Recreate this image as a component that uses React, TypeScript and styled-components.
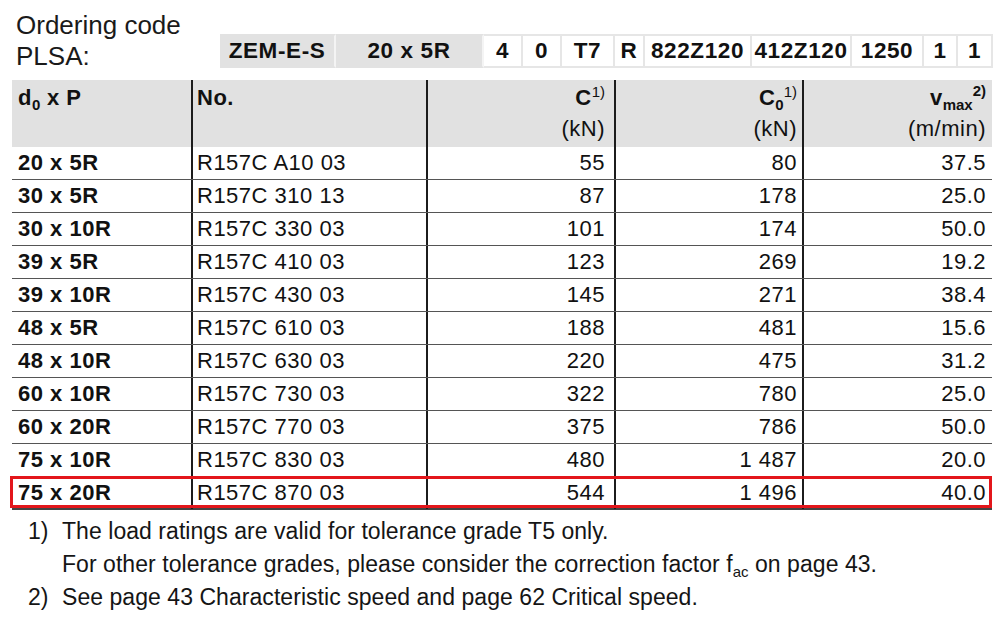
import React from "react";
import styled, { createGlobalStyle } from "styled-components";

const Global = createGlobalStyle`
  html, body { margin: 0; padding: 0; background: #fff; }
  body { font-family: "Liberation Sans", Arial, Helvetica, sans-serif; color: #111; }
`;

const Page = styled.div`
  width: 1000px;
  height: 623px;
  box-sizing: border-box;
  padding: 10px 0 0 0;
  overflow: hidden;
`;

const TopRow = styled.div`
  display: flex;
  align-items: flex-end;
  padding-left: 16px;
`;

const Title = styled.div`
  font-size: 26px;
  line-height: 31px;
  width: 204px;
  color: #1a1a1a;
`;

const CodeBar = styled.div`
  display: flex;
  height: 34px;
  margin-bottom: 4px;
`;

const CodeCell = styled.div<{ $w: number; $grey?: boolean }>`
  width: ${(p) => p.$w}px;
  box-sizing: border-box;
  display: flex;
  align-items: center;
  justify-content: center;
  font-weight: bold;
  font-size: 22.5px;
  letter-spacing: 0.6px;
  background: ${(p) => (p.$grey ? "#e2e2e2" : "#fff")};
  border-top: 2px solid ${(p) => (p.$grey ? "#e2e2e2" : "#e6e6e6")};
  border-bottom: 2px solid ${(p) => (p.$grey ? "#e2e2e2" : "#e6e6e6")};
  border-right: 2px solid ${(p) => (p.$grey ? "#f4f4f4" : "#e6e6e6")};
`;

const Table = styled.div`
  margin: 8px 0 0 12px;
  width: 980px;
`;

const COLS = "179px 235px 188px 188px 190px";

const HeadRow = styled.div`
  display: grid;
  grid-template-columns: ${COLS};
  background: #e1e1e1;
  height: 67px;
`;

const Row = styled.div<{ $hl?: boolean; $last?: boolean }>`
  display: grid;
  grid-template-columns: ${COLS};
  height: 33px;
  box-sizing: border-box;
  border-bottom: ${(p) => (p.$last ? "2px solid #444" : "1px solid #555")};
  position: relative;
  ${(p) =>
    p.$hl
      ? `&::after {
    content: "";
    position: absolute;
    left: -2px;
    right: 0;
    top: -1px;
    bottom: 0;
    border: 3px solid #e3161b;
    pointer-events: none;
  }`
      : ""}
`;

const HeadCell = styled.div<{ $right?: boolean; $first?: boolean; $pr?: number }>`
  box-sizing: border-box;
  border-left: ${(p) => (p.$first ? "none" : "2px solid #1c1c1c")};
  padding: 2px ${(p) => p.$pr ?? 8}px 0 ${(p) => (p.$first ? 6 : 4)}px;
  text-align: ${(p) => (p.$right ? "right" : "left")};
  font-size: 22px;
  letter-spacing: 0.5px;
  line-height: 31px;
  white-space: nowrap;
`;

const Cell = styled.div<{ $right?: boolean; $first?: boolean; $bold?: boolean; $pr?: number }>`
  box-sizing: border-box;
  border-left: ${(p) => (p.$first ? "none" : "2px solid #1c1c1c")};
  padding: 0 ${(p) => p.$pr ?? 8}px 0 ${(p) => (p.$first ? 6 : 4)}px;
  text-align: ${(p) => (p.$right ? "right" : "left")};
  font-size: 22px;
  font-weight: ${(p) => (p.$bold ? "bold" : "normal")};
  letter-spacing: 0.5px;
  line-height: 32px;
  white-space: nowrap;
`;

const B = styled.span`
  font-weight: bold;
`;

const Sub = styled.sub<{ $bold?: boolean }>`
  font-size: 15px;
  vertical-align: -5px;
  line-height: 0;
  letter-spacing: 0;
  font-weight: ${(p) => (p.$bold ? "bold" : "normal")};
`;

const Sup = styled.sup<{ $bold?: boolean; $up?: number }>`
  font-size: 15px;
  vertical-align: ${(p) => p.$up ?? 8}px;
  line-height: 0;
  letter-spacing: 0;
  font-weight: ${(p) => (p.$bold ? "bold" : "normal")};
`;

const Notes = styled.div`
  padding: 5px 0 0 28px;
  font-size: 23px;
  letter-spacing: 0.05px;
  line-height: 33px;
  color: #151515;
`;

const Note = styled.div`
  display: grid;
  grid-template-columns: 34px 1fr;
`;

const codes: { t: string; w: number; grey?: boolean }[] = [
  { t: "ZEM-E-S", w: 116, grey: true },
  { t: "20 x 5R", w: 148, grey: true },
  { t: "4", w: 39 },
  { t: "0", w: 39 },
  { t: "T7", w: 53 },
  { t: "R", w: 30 },
  { t: "822Z120", w: 107 },
  { t: "412Z120", w: 100 },
  { t: "1250", w: 72 },
  { t: "1", w: 34 },
  { t: "1", w: 35 },
];

const rows: [string, string, string, string, string][] = [
  ["20 x 5R", "R157C A10 03", "55", "80", "37.5"],
  ["30 x 5R", "R157C 310 13", "87", "178", "25.0"],
  ["30 x 10R", "R157C 330 03", "101", "174", "50.0"],
  ["39 x 5R", "R157C 410 03", "123", "269", "19.2"],
  ["39 x 10R", "R157C 430 03", "145", "271", "38.4"],
  ["48 x 5R", "R157C 610 03", "188", "481", "15.6"],
  ["48 x 10R", "R157C 630 03", "220", "475", "31.2"],
  ["60 x 10R", "R157C 730 03", "322", "780", "25.0"],
  ["60 x 20R", "R157C 770 03", "375", "786", "50.0"],
  ["75 x 10R", "R157C 830 03", "480", "1 487", "20.0"],
  ["75 x 20R", "R157C 870 03", "544", "1 496", "40.0"],
];

export default function App() {
  return (
    <Page>
      <Global />
      <TopRow>
        <Title>
          Ordering code
          <br />
          PLSA:
        </Title>
        <CodeBar>
          {codes.map((c, i) => (
            <CodeCell key={i} $w={c.w} $grey={c.grey}>
              {c.t}
            </CodeCell>
          ))}
        </CodeBar>
      </TopRow>
      <Table>
        <HeadRow>
          <HeadCell $first>
            <B>
              d<Sub $bold>0</Sub> x P
            </B>
          </HeadCell>
          <HeadCell>
            <B>No.</B>
          </HeadCell>
          <HeadCell $right $pr={9}>
            <B>C</B>
            <Sup>1)</Sup>
            <br />
            (kN)
          </HeadCell>
          <HeadCell $right $pr={5}>
            <B>
              C<Sub $bold>0</Sub>
            </B>
            <Sup>1)</Sup>
            <br />
            (kN)
          </HeadCell>
          <HeadCell $right $pr={6}>
            <B>
              v<Sub $bold>max</Sub>
            </B>
            <Sup $bold $up={9}>2)</Sup>
            <br />
            (m/min)
          </HeadCell>
        </HeadRow>
        {rows.map((r, i) => (
          <Row key={i} $hl={i === rows.length - 1} $last={i === rows.length - 1}>
            <Cell $first $bold>
              {r[0]}
            </Cell>
            <Cell>{r[1]}</Cell>
            <Cell $right $pr={9}>
              {r[2]}
            </Cell>
            <Cell $right $pr={5}>
              {r[3]}
            </Cell>
            <Cell $right $pr={6}>
              {r[4]}
            </Cell>
          </Row>
        ))}
      </Table>
      <Notes>
        <Note>
          <span>1)</span>
          <span>The load ratings are valid for tolerance grade T5 only.</span>
        </Note>
        <Note>
          <span />
          <span>
            For other tolerance grades, please consider the correction factor f
            <Sub>ac</Sub> on page 43.
          </span>
        </Note>
        <Note>
          <span>2)</span>
          <span>See page 43 Characteristic speed and page 62 Critical speed.</span>
        </Note>
      </Notes>
    </Page>
  );
}
